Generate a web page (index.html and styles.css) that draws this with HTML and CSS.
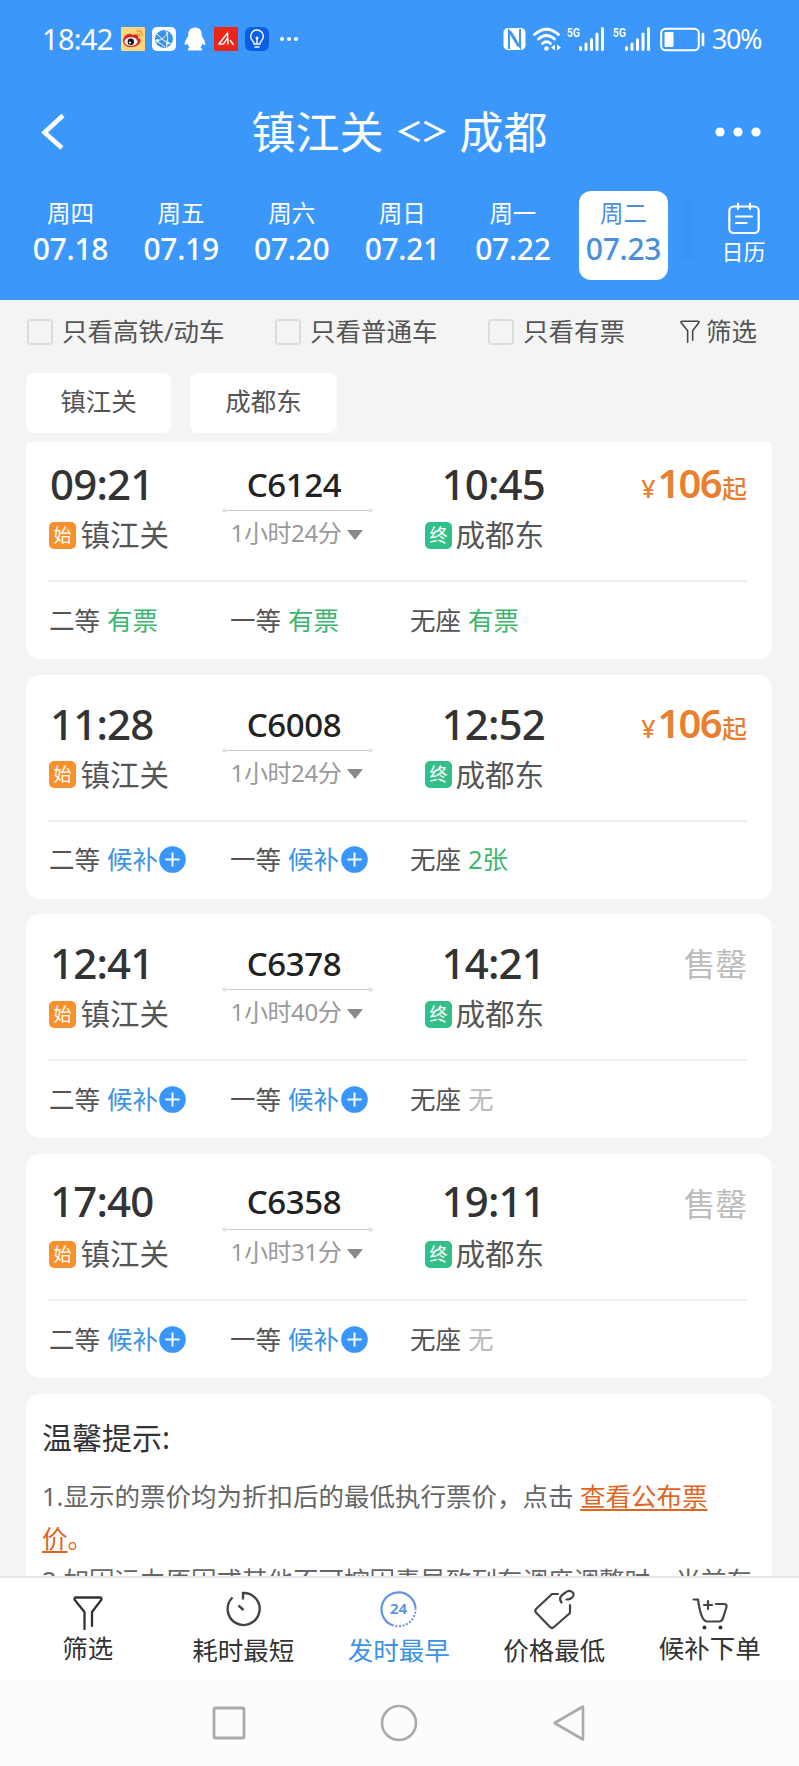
FILE: index.html
```html
<!DOCTYPE html>
<html lang="zh-CN">
<head>
<meta charset="utf-8">
<title>镇江关 - 成都</title>
<link rel="stylesheet" href="styles.css">
</head>
<body>
<svg class="defs" width="0" height="0" aria-hidden="true">
  <symbol id="signal" viewBox="0 0 26 24"><path d="M1.500 20.500v2M7 17v5.500M12.500 12.500v10M18 7v15.500M23.500 1.500v21" stroke="currentColor" stroke-width="3" fill="none" stroke-linecap="round"/></symbol>
  <symbol id="plus" viewBox="0 0 27 27"><circle cx="13.500" cy="13.500" r="13.300" fill="#3a96fa"/><path d="M13.500 6.500v14M6.500 13.500h14" stroke="#fff" stroke-width="1.900"/></symbol>
  <symbol id="funnel" viewBox="0 0 30 34"><path d="M11.500 33V16L1.800 4Q.8 1.500 3 1.500H27Q29.200 1.500 28.200 4L19 16V30" fill="none" stroke="currentColor" stroke-width="2.300" stroke-linejoin="round" stroke-linecap="round"/></symbol>
  <symbol id="line" viewBox="0 0 151 5"><path d="M4 2.500H147" stroke="#ccc" stroke-width="1"/><circle cx="2.500" cy="2.500" r="1.600" fill="#eee" stroke="#ccc" stroke-width=".8"/><circle cx="148.500" cy="2.500" r="1.600" fill="#eee" stroke="#ccc" stroke-width=".8"/></symbol>
</svg>

<header class="header">
  <div class="status">
    <div class="status-left">
      <span class="clock">18:42</span>
      <svg width="24" height="24" viewBox="0 0 24 24"><rect width="24" height="24" rx="1" fill="#fbd777"/><path d="M2 14Q2 9 7 7Q10 6 11 8Q18 6 17 11Q21 12 19 16Q16 20 10 20Q3 20 2 14Z" fill="#df2029"/><ellipse cx="10" cy="14.500" rx="6.500" ry="4.300" fill="#fff"/><circle cx="9.800" cy="14.700" r="3.200" fill="#111"/><circle cx="9" cy="15.600" r="1.100" fill="#fff"/><path d="M15.500 4Q21 3 21.500 9M15.500 7Q18.500 6.500 18.600 9.500" fill="none" stroke="#ef8d2b" stroke-width="1.300"/></svg>
      <svg width="24" height="24" viewBox="0 0 24 24"><rect width="24" height="24" rx="5" fill="#fff"/><circle cx="12" cy="12" r="9" fill="#3c93ee"/><path d="M5 7Q10 14 19 17M5 14Q13 12 16 5M14 4Q17 9 14.500 20M4 14Q10 17 13 20" fill="none" stroke="#fff" stroke-width=".9"/><circle cx="5.500" cy="13.500" r="1.500" fill="#fff"/><circle cx="15.500" cy="16" r="1.500" fill="#fff"/></svg>
      <svg width="22" height="24" viewBox="0 0 22 24"><path d="M11 .5C6 .5 4 4 4.200 9C3 11 .5 14.500 .8 17.500Q1 19 3.500 16.500Q4 19 5.500 20.500Q3 22 4 23.500H10L11 23L12 23.500H18Q19 22 16.500 20.500Q18 19 18.500 16.500Q21 19 21.200 17.500C21.500 14.500 19 11 17.800 9C18 4 16 .5 11 .5Z" fill="#fff"/></svg>
      <svg width="24" height="24" viewBox="0 0 24 24"><rect width="24" height="24" rx="1" fill="#ed2418"/><path d="M4.500 17.500L13.500 6L14 17.500M5 17H9.500L13.500 11M16 13L19.500 18" fill="none" stroke="#fff" stroke-width="1.400"/></svg>
      <svg width="24" height="24" viewBox="0 0 24 24"><rect width="24" height="24" rx="6" fill="#0b5ee8"/><path d="M9 17Q9 15 7.300 13.500A6.300 6.300 0 1 1 16.700 13.500Q15 15 15 17ZM9.500 20H14.500M12 17V12" fill="none" stroke="#fff" stroke-width="1.400"/><circle cx="12" cy="11" r="1.500" fill="#fff"/></svg>
      <svg class="more" width="20" height="24" viewBox="0 0 20 24"><g fill="#fff"><circle cx="3" cy="12" r="2"/><circle cx="10" cy="12" r="2"/><circle cx="17" cy="12" r="2"/></g></svg>
    </div>
    <div class="status-right">
      <svg width="23" height="24" viewBox="0 0 23 24"><rect x=".5" y="1" width="22" height="22" rx="4.500" fill="#fff"/><path d="M6 22V4L15.500 19.500M17 2V20L7.500 4.500" fill="none" stroke="#3c97fb" stroke-width="2"/></svg>
      <svg class="wifi" width="28" height="25" viewBox="0 0 28 25"><g fill="none" stroke="#fff" stroke-width="2.700" stroke-linecap="round"><path d="M1.500 7.500Q13.500-3 25.500 7.500M5.500 12Q13.500 5 21.500 12M9.500 16.500Q13.500 13 17.500 16.500"/></g><circle cx="13.500" cy="21.500" r="2.300" fill="#fff"/><path d="M22 17.500V23.500L18 20.500ZM24 17.500V23.500L28 20.500Z" fill="#fff"/></svg>
      <span class="net">5G</span><svg class="sig" width="26" height="24"><use href="#signal"/></svg>
      <span class="net net2">5G</span><svg class="sig" width="26" height="24"><use href="#signal"/></svg>
      <svg class="battery" width="45" height="25" viewBox="0 0 45 25"><rect x="1.200" y="1.700" width="37.600" height="21.600" rx="4.500" fill="none" stroke="#fff" stroke-width="2"/><rect x="4.500" y="5" width="9" height="15" rx="1" fill="#fff"/><path d="M43 7V18" stroke="#fff" stroke-width="2.600" stroke-linecap="round"/></svg>
      <span class="percent">30%</span>
    </div>
  </div>
  <div class="titlebar">
    <svg width="26" height="36" viewBox="0 0 26 36"><path d="M23 1.500L4.500 18.500L22 34" fill="none" stroke="#fff" stroke-width="4.600"/></svg>
    <h1 class="title"><span>镇江关</span><svg width="48" height="24" viewBox="0 0 48 24"><path d="M21.500 2L3 11.500L21.500 21M26.500 2L45 11.500L26.500 21" fill="none" stroke="#fff" stroke-width="3"/></svg><span>成都</span></h1>
    <svg width="46" height="10" viewBox="0 0 46 10"><g fill="#fff"><circle cx="5" cy="5" r="4.600"/><circle cx="23" cy="5" r="4.600"/><circle cx="41" cy="5" r="4.600"/></g></svg>
  </div>
  <nav class="dates">
    <div class="day"><span>周四</span><b>07.18</b></div>
    <div class="day"><span>周五</span><b>07.19</b></div>
    <div class="day"><span>周六</span><b>07.20</b></div>
    <div class="day"><span>周日</span><b>07.21</b></div>
    <div class="day"><span>周一</span><b>07.22</b></div>
    <div class="day selected"><span>周二</span><b>07.23</b></div>
    <i class="shade"></i>
    <div class="calendar"><svg width="32" height="33" viewBox="0 0 32 33"><rect x="1.300" y="4.500" width="29.400" height="26.500" rx="4.500" fill="none" stroke="#fff" stroke-width="2.200"/><path d="M10 1.500V7M22 1.500V7M8 14.500H24M8 21H18.500" stroke="#fff" stroke-width="2.200" stroke-linecap="round"/></svg><span>日历</span></div>
  </nav>
</header>

<section class="filters">
  <label class="check c1"><i></i><span>只看高铁/动车</span></label>
  <label class="check c2"><i></i><span>只看普通车</span></label>
  <label class="check c3"><i></i><span>只看有票</span></label>
  <span class="sift"><svg width="20" height="23"><use href="#funnel"/></svg><span>筛选</span></span>
</section>
<section class="stations"><span class="tab t1">镇江关</span><span class="tab t2">成都东</span></section>

<main class="list">
  <article class="card first">
    <div class="trip">
      <div class="from"><div class="time">09:21</div><div class="place"><i class="tag start">始</i>镇江关</div></div>
      <div class="mid"><div class="train">C6124</div><svg width="151" height="5"><use href="#line"/></svg><div class="span">1小时24分<i class="caret"></i></div></div>
      <div class="to"><div class="time">10:45</div><div class="place"><i class="tag end">终</i>成都东</div></div>
      <div class="price"><small>¥</small><b>106</b><em>起</em></div>
    </div>
    <div class="seats"><div>二等<span class="has">有票</span></div><div>一等<span class="has">有票</span></div><div>无座<span class="has">有票</span></div></div>
  </article>
  <article class="card">
    <div class="trip">
      <div class="from"><div class="time">11:28</div><div class="place"><i class="tag start">始</i>镇江关</div></div>
      <div class="mid"><div class="train">C6008</div><svg width="151" height="5"><use href="#line"/></svg><div class="span">1小时24分<i class="caret"></i></div></div>
      <div class="to"><div class="time">12:52</div><div class="place"><i class="tag end">终</i>成都东</div></div>
      <div class="price"><small>¥</small><b>106</b><em>起</em></div>
    </div>
    <div class="seats"><div>二等<span class="wait">候补</span><svg width="27" height="27"><use href="#plus"/></svg></div><div>一等<span class="wait">候补</span><svg class="p2" width="27" height="27"><use href="#plus"/></svg></div><div>无座<span class="has">2张</span></div></div>
  </article>
  <article class="card">
    <div class="trip">
      <div class="from"><div class="time">12:41</div><div class="place"><i class="tag start">始</i>镇江关</div></div>
      <div class="mid"><div class="train">C6378</div><svg width="151" height="5"><use href="#line"/></svg><div class="span">1小时40分<i class="caret"></i></div></div>
      <div class="to"><div class="time">14:21</div><div class="place"><i class="tag end">终</i>成都东</div></div>
      <div class="soldout">售罄</div>
    </div>
    <div class="seats"><div>二等<span class="wait">候补</span><svg width="27" height="27"><use href="#plus"/></svg></div><div>一等<span class="wait">候补</span><svg class="p2" width="27" height="27"><use href="#plus"/></svg></div><div>无座<span class="none">无</span></div></div>
  </article>
  <article class="card last">
    <div class="trip">
      <div class="from"><div class="time">17:40</div><div class="place"><i class="tag start">始</i>镇江关</div></div>
      <div class="mid"><div class="train">C6358</div><svg width="151" height="5"><use href="#line"/></svg><div class="span">1小时31分<i class="caret"></i></div></div>
      <div class="to"><div class="time">19:11</div><div class="place"><i class="tag end">终</i>成都东</div></div>
      <div class="soldout">售罄</div>
    </div>
    <div class="seats"><div>二等<span class="wait">候补</span><svg width="27" height="27"><use href="#plus"/></svg></div><div>一等<span class="wait">候补</span><svg class="p2" width="27" height="27"><use href="#plus"/></svg></div><div>无座<span class="none">无</span></div></div>
  </article>
  <article class="tips">
    <h2>温馨提示:</h2>
    <p>1.显示的票价均为折扣后的最低执行票价，点击 <a>查看公布票</a></p>
    <p><a>价</a><span class="stop">。</span></p>
    <p>2.如因运力原因或其他不可控因素导致列车调度调整时，当前车</p>
  </article>
</main>

<footer class="tabbar">
  <div class="item up"><svg width="30" height="34"><use href="#funnel"/></svg><span>筛选</span></div>
  <div class="item"><svg width="36" height="36" viewBox="0 0 36 36"><path d="M7.500 6.500A16 16 0 1 0 18 2V8.500M13.500 14.500L18.500 19" fill="none" stroke="#444" stroke-width="2.400"/></svg><span>耗时最短</span></div>
  <div class="item active"><svg width="37" height="37" viewBox="0 0 37 37"><path d="M12 35A17 17 0 1 1 35.500 18.500" fill="none" stroke="#6095e6" stroke-width="2.200"/><path d="M12 35A17 17 0 0 0 35.500 18.500" fill="none" stroke="#6095e6" stroke-width="2" stroke-dasharray="2 1.600"/><text class="badge24" x="18.500" y="24" text-anchor="middle">24</text></svg><span>发时最早</span></div>
  <div class="item"><svg class="price-icon" width="42" height="42" viewBox="0 0 42 42"><g fill="none" stroke="#444" stroke-width="2.200" stroke-linecap="round" stroke-linejoin="round"><path d="M25 6H19L3 21Q1.500 23 3 24.500L17 39Q19 41 21 39L37 25V17"/><path d="M28.500 14.500C24.500 9.500 29.500 6.500 32.500 4.500C37.500 .5 43.500 6 39 9.500Q37.500 11.500 33.500 11.500"/></g></svg><span>价格最低</span></div>
  <div class="item up"><svg width="36" height="32" viewBox="0 0 36 32"><g fill="none" stroke="#444" stroke-width="2.200" stroke-linecap="round" stroke-linejoin="round"><path d="M1.500 1.500H6Q9 23.500 15 23.500H27Q30 23.500 31 20L34.500 9Q35 6 32 6H24M16 3V11M12 7H20"/></g><circle cx="12.500" cy="29.500" r="2" fill="#333"/><circle cx="28.500" cy="29.500" r="2" fill="#333"/></svg><span>候补下单</span></div>
</footer>
<div class="sysnav">
  <svg width="34" height="34" viewBox="0 0 34 34"><rect x="2" y="2" width="30" height="30" rx="1.500" fill="none" stroke="#aaa" stroke-width="2.800"/></svg>
  <svg width="38" height="38" viewBox="0 0 38 38"><circle cx="19" cy="19" r="17" fill="none" stroke="#aaa" stroke-width="2.600"/></svg>
  <svg width="34" height="38" viewBox="0 0 34 38"><path d="M31 2.500V35.500L2.500 19Z" fill="none" stroke="#aaa" stroke-width="2.600" stroke-linejoin="round"/></svg>
</div>
</body>
</html>
```

FILE: styles.css
```css
* { box-sizing: border-box; }
body { margin: 0; width: 799px; height: 1766px; overflow: hidden; display: flex; flex-direction: column; background: #f4f4f4; color: #555; font-family: "Noto Sans", "Noto Sans CJK SC", sans-serif; font-size: 25.500px; line-height: 36px; white-space: nowrap; }
svg { display: block; flex: none; overflow: visible; }
.defs { position: absolute; }
i, em { font-style: normal; }

.header { height: 300px; flex: none; background: #3c97fb; color: #fff; }
.status { height: 78px; padding: 0 38px 0 42px; display: flex; justify-content: space-between; align-items: center; }
.status-left, .status-right { display: flex; align-items: center; }
.status-left { gap: 7.700px; }
.clock { width: 71px; font-size: 29px; letter-spacing: -.7px; }
.more { margin-left: 2px; }
.net { font-family: Roboto, sans-serif; font-size: 13px; font-weight: 700; line-height: 12px; align-self: flex-start; margin-top: 1px; width: 12px; transform: scaleX(.8); transform-origin: left; }
.status-right { height: 26px; }
.wifi { margin: 0 6px 0 7px; }
.net2 { margin-left: 8px; }
.battery { margin: 0 7px 0 9px; }
.percent { font-size: 27px; letter-spacing: -1.400px; width: 49px; }
.titlebar { height: 108px; padding: 0 38px 0 40px; display: flex; align-items: center; justify-content: space-between; }
.title { margin: 0 0 0 18px; font-size: 44px; line-height: 60px; font-weight: 400; display: flex; align-items: center; gap: 14px; }
.dates { display: flex; height: 114px; padding: 5px 0 0 26px; }
.day { width: 89px; height: 89px; margin-right: 21.600px; border-radius: 12px; display: flex; flex-direction: column; align-items: center; padding-top: 6px; flex: none; }
.day span { font-size: 23.500px; line-height: 32px; }
.day b { font-size: 30px; line-height: 39px; font-weight: 500; letter-spacing: -.3px; }
.selected { background: #fff; color: #4a8fdc; }
.shade { width: 8px; height: 56px; margin: 12px 0 0 -6px; background: #3991f2; filter: blur(2px); }
.calendar { margin: 11px 0 0 27px; width: 50px; display: flex; flex-direction: column; align-items: center; }
.calendar span { font-size: 22px; line-height: 32px; }

.filters { height: 63px; flex: none; display: flex; align-items: center; padding-left: 27px; }
.filters span span, .check span { padding-bottom: 2px; }
.check { display: flex; align-items: center; gap: 9px; }
.check i { width: 26px; height: 26px; border: 2px solid #dcdcdc; border-radius: 4px; }
.c1 { width: 248px; }
.c2 { width: 213px; }
.c3 { width: 192px; }
.sift { display: flex; align-items: center; gap: 6px; }
.sift svg { color: #444; }
.stations { display: flex; flex: none; height: 79px; padding: 10px 0 9px 26px; gap: 19px; }
.tab { height: 60px; width: 145px; background: #fff; border-radius: 8px; text-align: center; line-height: 57px; }
.t2 { width: 147px; }

.list { height: 1134px; flex: none; overflow: hidden; padding: 0 27px 0 26px; }
.card { height: 224px; margin-bottom: 15.700px; background: #fff; border-radius: 14px; padding: 0 25px 0 22px; }
.first { margin-top: -7px; }
.trip { height: 147px; border-bottom: 2px solid #ededed; display: grid; grid-template-columns: 174px 151px 172px 1fr; padding-top: 24px; }
.time { color: #333; font-size: 42px; line-height: 50px; font-weight: 500; height: 54px; letter-spacing: -.8px; }
.from .time { padding-left: 2px; }
.place { display: flex; align-items: center; gap: 5px; font-size: 29.500px; line-height: 44px; }
.tag { width: 27px; height: 27px; border-radius: 5px; color: #fff; font-size: 18px; line-height: 26px; text-align: center; flex: none; }
.start { background: #f6912b; margin-left: 1px; }
.from .place { gap: 4.500px; }
.end { background: #33c088; }
.to { text-align: right; }
.to .place { justify-content: flex-end; gap: 3.500px; padding-right: 1px; }
.mid { text-align: center; }
.train { color: #222; font-size: 33px; line-height: 51px; height: 49px; font-weight: 500; letter-spacing: -.4px; padding-right: 7px; }
.span { display: flex; justify-content: center; align-items: center; gap: 6px; color: #999; font-size: 24px; line-height: 39px; letter-spacing: -.4px; padding-right: 1px; }
.caret { border: 8px solid transparent; border-top: 10px solid #888; border-bottom: 0; margin-top: 4px; }
.last .time { line-height: 46px; }
.last .train { line-height: 47px; }
.price { color: #e8802f; display: flex; justify-content: flex-end; align-items: baseline; line-height: 48px; height: 50px; }
.price small { font-size: 25px; font-weight: 500; margin-right: 2px; }
.price b { font-size: 40px; font-weight: 600; letter-spacing: -1.700px; margin-right: 1px; }
.price em { font-size: 25px; font-weight: 500; }
.soldout { text-align: right; font-size: 31.500px; line-height: 52px; color: #bbb; }
.seats { display: grid; grid-template-columns: 181px 180px 1fr; height: 75px; align-items: center; padding-left: 1px; }
.seats div { display: flex; align-items: center; }
.seats span { margin-left: 7px; }
.seats svg { margin: 1px 0 0 1px; }
.seats .p2 { margin-left: 2px; }
.has { color: #3cb76c; }
.wait { color: #3b93e6; }
.none { color: #bbb; }
.tips { background: #fff; height: 240px; border-radius: 14px 14px 0 0; padding: 23px 16px; color: #666; }
.tips h2 { margin: 0 0 16px; font-size: 30px; line-height: 42px; font-weight: 400; color: #333; }
.tips p { margin: 0; line-height: 42.300px; }
.tips a { color: #e2641f; text-decoration: underline; text-decoration-thickness: 2px; text-underline-offset: 3px; }
.stop { color: #e2641f; }

.tabbar { flex: none; height: 104px; background: #fff; border-top: 2px solid #e6e6e6; display: grid; grid-template-columns: repeat(5, 155.500px); padding-left: 10px; color: #333; }
.item { display: flex; flex-direction: column; align-items: center; justify-content: flex-end; padding-bottom: 13px; }
.item span { line-height: 34px; }
.item svg { margin-bottom: 6px; }
.item .price-icon { margin-bottom: 3px; }
.item.up { padding-bottom: 15px; }
.item.up svg { margin-bottom: 1px; }
.active { color: #3b93e6; }
.badge24 { font: 700 15px "Noto Sans", sans-serif; fill: #6095e6; }
.sysnav { flex: 1; background: #fcfcfc; display: flex; align-items: center; justify-content: center; gap: 134px; padding-right: 1px; }
```
